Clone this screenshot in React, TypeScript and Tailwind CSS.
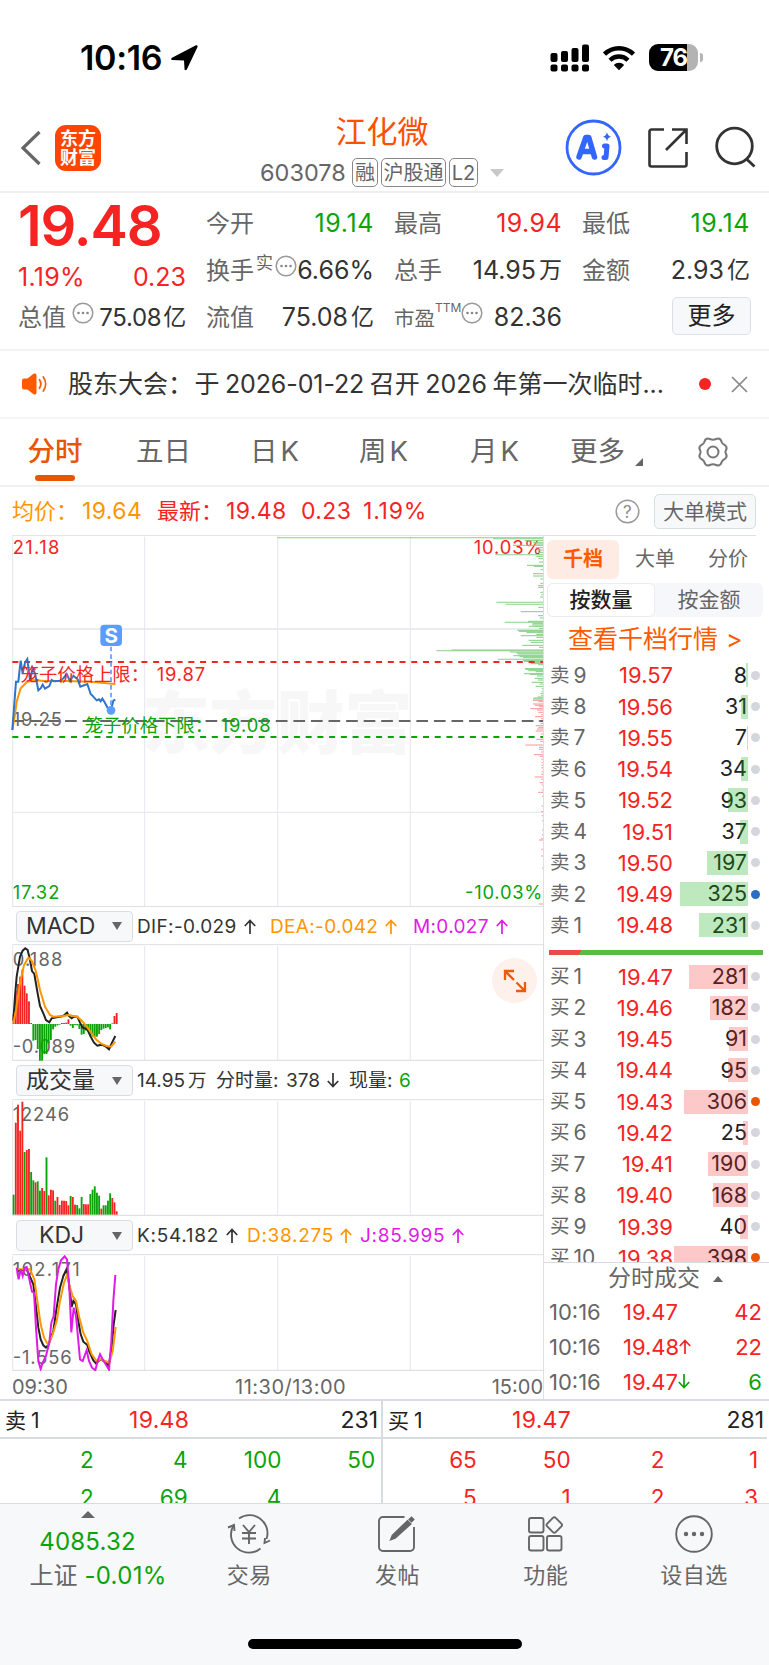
import type { ReactNode } from "react";
import { clsx } from "clsx";

const RED = "#f62323";
const GREEN = "#0aa30a";
const ORANGE = "#ff9500";
const MAGENTA = "#e01be6";
const GRID = "#e3e6ee";

/* Intraday charts are drawn on a 3x grid: 1629 units across 543px. */

const priceLine =
  "37,600 43,520 48,455 55,455 62,392 68,430 75,398 82,387 90,450 98,415 105,430 110,455 115,481 123,474 128,464 135,476 148,468 155,450 162,454 180,452 190,445 200,432 210,453 220,437 233,448 241,470 262,462 272,492 280,500 290,511 297,508 302,514 307,506 314,517 323,534 333,540 340,512 346,509";
const avgLine =
  "37,600 44,560 50,515 62,475 82,455 105,450 130,453 200,453 270,455 346,462";

const difLine =
  "40,362 45,290 50,230 60,170 68,152 76,145 83,150 90,180 96,213 103,222 112,275 120,318 130,340 138,360 148,367 155,355 170,352 190,348 201,338 207,348 215,355 222,350 232,350 240,368 248,383 262,388 272,410 282,428 292,437 305,434 318,440 327,448 335,430 346,408";
const deaLine =
  "40,370 48,330 60,250 72,195 85,173 95,182 108,215 120,270 135,320 150,345 160,350 190,348 205,345 232,350 248,365 262,382 275,400 290,420 305,432 320,438 333,440 346,425";

const kLine =
  "52,390 80,385 100,430 106,480 115,560 122,595 130,613 138,620 145,612 160,570 170,500 180,440 190,405 200,385 206,420 215,498 220,480 228,490 235,540 242,580 250,602 262,612 268,632 280,658 288,667 302,655 315,662 326,675 335,620 341,550 347,507";
const dLine =
  "52,385 90,385 103,415 112,480 122,550 132,590 145,612 158,580 170,540 180,480 192,425 201,402 210,440 218,465 228,480 238,530 250,575 262,600 275,640 290,660 302,655 315,660 328,665 338,630 347,558";
const jLine =
  "50,380 56,415 62,385 68,405 74,380 80,378 88,415 96,452 102,455 108,560 115,660 122,684 128,665 138,645 148,605 154,545 161,525 168,430 175,385 183,358 194,346 201,355 208,440 214,574 221,500 228,525 235,600 240,655 248,660 260,628 267,660 276,680 286,688 293,660 300,640 308,655 327,686 334,600 340,480 346,402";

const macdBars = [
  30, 100, 120, 142, 163, 115, 92, 68, 3, -50, -48, -75, -110, -110, -90, -90, -58, -48, -16, -8, -4, -2, 3, 3, 4, 14,
  -5, -12, -3, -4, -15, -32, -30, -20, -22, -35, -38, -38, -38, -30, -18, -14, -12, -10, -16, 2, 24, 33,
];

// positive = up minute, negative = down minute
const volumeBars = [
  -60, 276, 330, 252, 339, -188, 194, 197, -128, -103, 97, -100, -72, 80, 71, -172, 58, 75, 73, -42, 53, 29, 42, 42, 41,
  28, -56, 53, 30, -29, -19, -53, 32, 31, 31, -62, -75, -85, -66, -57, 18, -28, -28, -42, -64, 50, 37, 10,
];

// order depth, [y, length]
const depth: [number, number][] = [
  [23, 798], [26, 150], [32, 55], [38, 30], [42, 24], [46, 90], [53, 22], [60, 16], [67, 14], [74, 143], [79, 20],
  [86, 14], [96, 12], [106, 48], [109, 28], [119, 8], [131, 30], [138, 30], [147, 8], [160, 8], [167, 15], [172, 14],
  [187, 8], [194, 5], [201, 8], [217, 140], [223, 112], [232, 14], [245, 67], [257, 15], [264, 10], [274, 45],
  [277, 115], [281, 32], [285, 32], [289, 42], [295, 12], [301, 77], [304, 72], [308, 50], [313, 20], [317, 67],
  [322, 20], [331, 43], [337, 37], [346, 62], [352, 12], [360, 275], [362, 320], [366, 100], [369, 80], [372, 75],
  [377, 89], [380, 70], [383, 60], [388, 136], [391, 60], [394, 57], [398, 40], [401, 36], [404, 14], [416, 55],
  [418, 52], [422, 44], [425, 22], [431, 57], [433, 40], [438, 18], [445, 25], [450, 15], [457, 34], [462, 10],
  [469, 22], [476, 4], [484, 4], [490, 8], [496, 6], [501, 16], [504, 28], [507, 30],
  [511, 30], [515, 14], [522, 30], [526, 24], [530, 12], [536, 38], [540, 18], [547, 14], [554, 6], [560, 24],
  [566, 6], [573, 14], [580, 8], [587, 22], [592, 14], [597, 18], [603, 22], [612, 6], [620, 8], [628, 20],
  [634, 8], [645, 53], [652, 12], [658, 12], [666, 6], [674, 27], [679, 10], [688, 5], [698, 4], [706, 5], [713, 5],
  [725, 4], [733, 6], [741, 25], [748, 6], [758, 10], [765, 4], [780, 4], [787, 14], [799, 3], [828, 4], [845, 6],
  [857, 4], [872, 3], [900, 3], [914, 3], [926, 6], [930, 12], [958, 5], [978, 6], [1015, 3], [1122, 12],
];

const asks: [string, string, number][] = [
  ["卖9", "19.57", 8],
  ["卖8", "19.56", 31],
  ["卖7", "19.55", 7],
  ["卖6", "19.54", 34],
  ["卖5", "19.52", 93],
  ["卖4", "19.51", 37],
  ["卖3", "19.50", 197],
  ["卖2", "19.49", 325],
  ["卖1", "19.48", 231],
];

const bids: [string, string, number][] = [
  ["买1", "19.47", 281],
  ["买2", "19.46", 182],
  ["买3", "19.45", 91],
  ["买4", "19.44", 95],
  ["买5", "19.43", 306],
  ["买6", "19.42", 25],
  ["买7", "19.41", 190],
  ["买8", "19.40", 168],
  ["买9", "19.39", 40],
  ["买10", "19.38", 398],
];

const barWidth = (qty: number) => Math.max(1, Math.min(74, Math.round(qty * 0.21)));

const StatusBar = () => (
  <div className="flex h-[96px] shrink-0 items-center pt-[19px] text-black">
    <span className="ml-[80px] w-[86px] text-[34px] font-semibold leading-none tracking-[-0.300px]">10:16</span>
    <svg className="ml-[5px] h-[26px] w-[27px]" viewBox="0 0 27 26">
      <path d="M26.500 2 15.800 24.500c-.6 1.200-2.200 1-2.300-.4L13 15.500 1.400 15C0 14.900-.1 13.300 1 12.700L24.500.5c1.200-.6 2.500.3 2 1.500Z" />
    </svg>
    <svg className="ml-[352px] h-[28px] w-[40px]" viewBox="0 0 40 28">
      <rect x="0.500" y="9" width="7" height="9" rx="2" />
      <rect x="11" y="7" width="7" height="11" rx="2" />
      <rect x="21.500" y="4" width="7" height="14" rx="2" />
      <rect x="32" y="0.500" width="7" height="17.500" rx="2" />
      <rect x="0.500" y="20.500" width="7" height="7" rx="2" />
      <rect x="11" y="20.500" width="7" height="7" rx="2" />
      <rect x="21.500" y="20.500" width="7" height="7" rx="2" />
      <rect x="32" y="20.500" width="7" height="7" rx="2" />
    </svg>
    <svg className="ml-[12px] h-[26px] w-[34px]" viewBox="0 0 34 26">
      <path d="M2.500 9.200a20.600 20.600 0 0 1 29 0" fill="none" stroke="#000" strokeWidth="4.500" />
      <path d="M8 15.200a12.800 12.800 0 0 1 18 0" fill="none" stroke="#000" strokeWidth="4.300" />
      <path d="M17 25.300 11.800 20a7.400 7.400 0 0 1 10.400 0Z" />
    </svg>
    <div className="ml-[13px] flex h-[27px] w-[49px] items-center justify-center overflow-hidden rounded-[9px] bg-[linear-gradient(90deg,#000_78%,#b3b3b3_78%)]">
      <span className="text-[24px] font-bold leading-none tracking-[-1px] text-white">76</span>
    </div>
    <div className="ml-[2px] h-[9px] w-[3px] rounded-r-full bg-[#b3b3b3]" />
  </div>
);

const Tag = ({ children, className }: { children: ReactNode; className: string }) => (
  <span
    className={clsx(
      "flex h-[29px] items-center justify-center rounded-[5px] border-[1.500px] border-[#888] text-[20px] leading-none text-[#666]",
      className,
    )}
  >
    {children}
  </span>
);

const Header = () => (
  <div className="flex h-[97px] shrink-0 items-start border-b-2 border-[#eee]">
    <svg className="ml-[20px] mt-[34px] h-[36px] w-[22px]" viewBox="0 0 22 36" fill="none" stroke="#666" strokeWidth="3.200">
      <path d="M19.500 2 3 18l16.500 16" />
    </svg>
    <div className="ml-[13px] mt-[29px] flex h-[46px] w-[46px] flex-col items-center justify-center rounded-[11px] bg-[#ff4600] text-[18px] font-bold leading-[19px] text-white">
      <span>东方</span>
      <span>财富</span>
    </div>
    <div className="ml-[159px] flex w-[244px] flex-col pt-[18px]">
      <div className="flex h-[34px] items-center justify-center text-[31px] leading-none text-[#ff5000]">江化微</div>
      <div className="mt-[9px] flex h-[31px] items-center">
        <span className="w-[92px] text-[23.500px] leading-none text-[#666]">603078</span>
        <Tag className="w-[26px]">融</Tag>
        <Tag className="ml-[3px] w-[65px]">沪股通</Tag>
        <Tag className="ml-[3px] w-[29px]">L2</Tag>
        <svg className="ml-[12px] h-[8px] w-[14px]" viewBox="0 0 14 8">
          <path d="M0 0h14L7 8Z" fill="#c8c8c8" />
        </svg>
      </div>
    </div>
    <svg className="ml-[61px] mt-[23px] h-[57px] w-[57px]" viewBox="0 0 57 57" fill="none">
      <circle cx="28.500" cy="28.500" r="26.500" stroke="#3366ff" strokeWidth="2.800" />
      <path
        d="M14 38 20.800 18.500h3L29.500 38M18 32.500h9"
        stroke="#3366ff"
        strokeWidth="5.500"
        strokeLinejoin="round"
        strokeLinecap="round"
      />
      <path d="M39.500 27h2.500L41 38.500h-2" stroke="#3366ff" strokeWidth="5" strokeLinejoin="round" strokeLinecap="round" />
      <path d="M42 13c.5 2.800 1.500 3.900 4 4.700-2.500.8-3.500 1.900-4 4.700-.5-2.800-1.500-3.900-4-4.700 2.500-.8 3.500-1.900 4-4.700Z" fill="#3366ff" />
    </svg>
    <svg className="ml-[25px] mt-[31px] h-[42px] w-[42px]" viewBox="0 0 42 42" fill="none" stroke="#333" strokeWidth="2.600">
      <path d="M17 2.500H4.500a2 2 0 0 0-2 2v33a2 2 0 0 0 2 2h33a2 2 0 0 0 2-2V25" />
      <path d="M25 2.500h14.500V17M39 3 19 23" />
    </svg>
    <svg className="ml-[26px] mt-[30px] h-[44px] w-[44px]" viewBox="0 0 44 44" fill="none" stroke="#333" strokeWidth="2.800">
      <circle cx="19.500" cy="20" r="17.800" />
      <path d="m31.500 33 8 7.500" />
    </svg>
  </div>
);

const Dots = ({ className }: { className?: string }) => (
  <svg className={clsx("h-[22px] w-[22px] shrink-0", className)} viewBox="0 0 22 22">
    <circle cx="11" cy="11" r="9.800" fill="none" stroke="#999" strokeWidth="1.500" />
    <g fill="#888">
      <circle cx="6.500" cy="11" r="1.300" />
      <circle cx="11" cy="11" r="1.300" />
      <circle cx="15.500" cy="11" r="1.300" />
    </g>
  </svg>
);

type StatProps = { label: string; value: string; unit?: string; tone?: string; extra?: ReactNode; small?: boolean };

const Stat = ({ label, value, unit, tone = "text-[#333]", extra, small }: StatProps) => (
  <div className="flex h-[47px] w-[168px] items-center leading-none">
    <span className={clsx("shrink-0 text-[#666]", small ? "mt-[4px] text-[20.500px]" : "text-[24px]")}>{label}</span>
    {extra}
    <span className={clsx("ml-auto flex items-center text-[25px]", tone)}>
      {value}
      {unit && <span className="ml-[3px] text-[23px]">{unit}</span>}
    </span>
  </div>
);

const Quote = () => (
  <div className="flex h-[158px] shrink-0 border-b-2 border-[#f3f3f3] pl-[18px]">
    <div className="w-[168px]">
      <div className="flex h-[66px] items-center text-[56px] font-semibold leading-none tracking-[-1.100px] text-[#f62323]">19.48</div>
      <div className="flex h-[37px] items-center justify-between text-[25px] leading-none text-[#f62323]">
        <span className="tracking-[0.300px]">1.19%</span>
        <span>0.23</span>
      </div>
      <div className="flex h-[43px] items-center leading-none">
        <span className="text-[24px] text-[#666]">总值</span>
        <Dots className="-mt-[10px] ml-[6px]" />
        <span className="ml-auto flex items-center text-[24px] tracking-[-0.300px] text-[#333]">
          75.08<span className="ml-[2px] text-[23px]">亿</span>
        </span>
      </div>
    </div>
    <div className="ml-[20px] grid h-[141px] grid-cols-[168px_168px_168px] gap-x-[20px] pt-[7px]">
      <Stat label="今开" value="19.14" tone="text-[#0aa30a] tracking-[0.600px]" />
      <Stat label="最高" value="19.94" tone="text-[#f62323] tracking-[0.400px]" />
      <Stat label="最低" value="19.14" tone="text-[#0aa30a] tracking-[0.600px]" />
      <Stat
        label="换手"
        value="6.66%"
        extra={
          <>
            <span className="-mt-[14px] ml-[2px] text-[17px] text-[#666]">实</span>
            <Dots className="-mt-[10px] ml-[2px]" />
          </>
        }
      />
      <Stat label="总手" value="14.95" unit="万" />
      <Stat label="金额" value="2.93" unit="亿" />
      <Stat label="流值" value="75.08" unit="亿" />
      <Stat
        label="市盈"
        value="82.36"
        small
        extra={
          <>
            <span className="-mt-[20px] text-[12px] text-[#666]">TTM</span>
            <Dots className="-mt-[10px]" />
          </>
        }
      />
      <div className="flex h-[44px] w-[169px] items-center justify-end">
        <button className="h-[38px] w-[79px] rounded-[5px] border-[1.500px] border-[#dcdfe6] bg-[#f7f8fa] text-[24px] leading-none text-[#222]">
          更多
        </button>
      </div>
    </div>
  </div>
);

const Notice = () => (
  <div className="flex h-[68px] shrink-0 items-center border-b-2 border-[#f5f5f5] leading-none text-[#333]">
    <svg className="ml-[22px] h-[22px] w-[26px]" viewBox="0 0 26 22">
      <path d="M0 7.500a2 2 0 0 1 2-2h3.500L11.500.8C13 0 14.500.6 14.500 2.200v17.600c0 1.600-1.500 2.200-3 1.400L5.500 16.500H2a2 2 0 0 1-2-2Z" fill="#ff5a00" />
      <path d="M17.500 6.800c1.600 2.500 1.600 5.900 0 8.400M21.300 4c3 4.200 3 9.800 0 14" fill="none" stroke="#ff5a00" strokeWidth="1.800" strokeLinecap="round" />
    </svg>
    <span className="ml-[20px] flex w-[596px] items-center justify-between whitespace-nowrap text-[25px]">
      <span>股东大会：</span>
      <span className="-ml-[4px]">于</span>
      <span className="tracking-[-0.100px]">2026-01-22</span>
      <span>召开</span>
      <span>2026</span>
      <span>年第一次临时...</span>
    </span>
    <span className="ml-[35px] h-[12px] w-[12px] rounded-full bg-[#f62323]" />
    <svg className="ml-[20px] h-[17px] w-[17px]" viewBox="0 0 17 17" stroke="#888" strokeWidth="1.700">
      <path d="m1 1 15 15M16 1 1 16" />
    </svg>
  </div>
);

const KTab = ({ period, className }: { period: string; className: string }) => (
  <span className={clsx("flex items-center gap-[3px]", className)}>
    <span>{period}</span>
    <span>K</span>
  </span>
);

const Tabs = () => (
  <div className="flex h-[68px] shrink-0 items-center border-b-2 border-[#f0f0f0] text-[27.500px] leading-none text-[#666]">
    <div className="ml-[27px] flex w-[56px] flex-col items-center pt-[15px] text-[#ea5504]">
      <span className="font-medium">分时</span>
      <span className="mt-[10px] h-[6px] w-[40px] rounded-[3px] bg-[#ea5504]" />
    </div>
    <span className="ml-[53px] w-[114px]">五日</span>
    <KTab period="日" className="w-[109px]" />
    <KTab period="周" className="w-[111px]" />
    <KTab period="月" className="w-[100px]" />
    <span className="w-[57px]">更多</span>
    <svg className="ml-[8px] mt-[20px] h-[8px] w-[8px]" viewBox="0 0 8 8">
      <path d="M8 0v8H0Z" fill="#666" />
    </svg>
    <svg className="ml-[53px] h-[32px] w-[34px]" viewBox="0 0 34 32" fill="none" stroke="#777" strokeWidth="2">
      <path
        d="M12 2.500c1.500 0 2.500 1.200 5 1.200s3.500-1.200 5-1.200c2.500 0 3.200 1.500 3.800 3.700.6 2 2.500 2.300 3.900 3.700 1.600 1.700.9 3.300.1 4.600-.6 1-.6 2 0 3 .8 1.300 1.500 2.900-.1 4.600-1.400 1.400-3.300 1.700-3.900 3.700-.6 2.200-1.300 3.700-3.800 3.700-1.500 0-2.500-1.200-5-1.200s-3.500 1.200-5 1.200c-2.500 0-3.200-1.500-3.800-3.700-.6-2-2.500-2.300-3.900-3.700-1.600-1.700-.9-3.300-.1-4.600.6-1 .6-2 0-3-.8-1.300-1.500-2.900.1-4.600 1.400-1.400 3.300-1.700 3.900-3.700C8.800 4 9.500 2.500 12 2.500Z"
        strokeLinejoin="round"
      />
      <circle cx="17" cy="16" r="5.500" />
    </svg>
  </div>
);

const InfoRow = () => (
  <div className="flex h-[48px] shrink-0 items-center text-[23px] leading-none tracking-[0.400px]">
    <span className="ml-[12px] w-[70px] text-[22px] tracking-normal text-[#ff9500]">均价：</span>
    <span className="w-[75px] text-[#ff9500]">19.64</span>
    <span className="w-[69px] text-[22px] tracking-normal text-[#f62323]">最新：</span>
    <span className="w-[75px] text-[#f62323]">19.48</span>
    <span className="w-[62px] text-[#f62323]">0.23</span>
    <span className="w-[252px] tracking-[0.800px] text-[#f62323]">1.19%</span>
    <svg className="h-[25px] w-[25px]" viewBox="0 0 25 25">
      <circle cx="12.500" cy="12.500" r="11.300" fill="none" stroke="#999" strokeWidth="1.500" />
      <text x="12.500" y="18.500" textAnchor="middle" fontSize="17" fill="#888">?</text>
    </svg>
    <button className="ml-[14px] h-[35px] w-[102px] rounded-[5px] border-[1.500px] border-[#d9dde6] bg-[#f7f8fa] text-[21px] leading-none tracking-normal text-[#666]">
      大单模式
    </button>
  </div>
);

const GridLines = ({ top, height }: { top: number; height: number }) => (
  <g stroke={GRID} strokeWidth="3">
    {[38, 434, 833, 1231].map((x) => (
      <path key={x} d={`M${x} ${top + 6}v${height - 8}`} />
    ))}
    <path d={`M37 ${top + 2}H1632`} stroke="#dcdfe5" />
    <path d={`M37 ${top + height - 2}H1632`} stroke="#d8dbe2" />
  </g>
);

const Bars = ({ data, zero, signed }: { data: number[]; zero: number; signed?: boolean }) => (
  <g>
    {data.map((v, i) => (
      <rect
        key={i}
        x={38 + i * 6.58}
        y={signed && v < 0 ? zero : zero - Math.abs(v)}
        width="5.600"
        height={Math.abs(v)}
        fill={v < 0 ? GREEN : RED}
      />
    ))}
  </g>
);

const PriceChart = () => (
  <svg className="block h-[372px] w-[543px]" viewBox="0 15 1629 1116">
    <text x="425" y="655" textLength="812" fontSize="204" fontWeight="900" fill="#f7f7f7">东方财富</text>
    <GridLines top={14} height={1118} />
    <path d="M37 297H1632" stroke={GRID} strokeWidth="5" />
    <path d="M37 847H1632" stroke={GRID} strokeWidth="3" />
    <g fontSize="55">
      <text x="38" y="73" fill={RED} textLength="140">21.18</text>
      <text x="1627" y="73" fill={RED} textAnchor="end" textLength="206">10.03%</text>
      <text x="38" y="588" fill="#666" textLength="148">19.25</text>
      <text x="38" y="1107" fill={GREEN} textLength="140">17.32</text>
      <text x="1627" y="1107" fill={GREEN} textAnchor="end" textLength="232">-10.03%</text>
    </g>
    <g strokeWidth="3.200">
      {depth.map(([y, len]) => (
        <path key={y} d={`M1629 ${y}h${-len}`} stroke={y < 509 ? "#86d086" : "#fb9a9a"} />
      ))}
    </g>
    <path d="M37 396H1629" stroke={RED} strokeWidth="6.500" strokeDasharray="18 17.200" />
    <path d="M37 573H1629" stroke="#666" strokeWidth="6" strokeDasharray="35 17.700" />
    <path d="M37 621H1629" stroke={GREEN} strokeWidth="6.500" strokeDasharray="18 17.200" />
    <polyline points={avgLine} fill="none" stroke={ORANGE} strokeWidth="6" />
    <polyline points={priceLine} fill="none" stroke="#2f74c8" strokeWidth="6" />
    <g fontSize="55">
      <text x="62" y="452" fill={RED} textLength="385">笼子价格上限：</text>
      <text x="470" y="452" fill={RED} textLength="145">19.87</text>
      <text x="254" y="607" fill={GREEN} textLength="385">笼子价格下限：</text>
      <text x="662" y="607" fill={GREEN} textLength="150">19.08</text>
    </g>
    <path d="M333 350V530" stroke="#5b9dff" strokeWidth="5" strokeDasharray="14 9" />
    <circle cx="333" cy="541" r="13" fill="#5b9dff" />
    <rect x="301" y="284" width="65" height="64" rx="12" fill="#5b9dff" />
    <text x="333.500" y="338" textAnchor="middle" fontSize="62" fontWeight="700" fill="#fff">S</text>
  </svg>
);

const Picker = ({ name, center }: { name: string; center?: boolean }) => (
  <button className="ml-[16px] flex h-[31px] w-[117px] shrink-0 items-center rounded-[4px] border border-[#d9dde3] bg-[#f6f8fa] pl-[9px] text-[23px] leading-none tracking-normal text-[#333]">
    <span className={clsx("w-[86px] text-left", center && "pl-[13px]")}>{name}</span>
    <svg className="h-[8px] w-[10px]" viewBox="0 0 10 8">
      <path d="M0 0h10L5 8Z" fill="#666" />
    </svg>
  </button>
);

const Arrow = ({ down, className = "ml-[7px]" }: { down?: boolean; className?: string }) => (
  <svg
    className={clsx("inline-block h-[15px] w-[12px] shrink-0", down && "rotate-180", className)}
    viewBox="0 0 12 15"
    fill="none"
    stroke="currentColor"
    strokeWidth="1.700"
  >
    <path d="M6 15V1.500M.8 7 6 1.500 11.200 7" />
  </svg>
);

const IndicatorHead = ({ name, center, className, children }: { name: string; center?: boolean; className: string; children: ReactNode }) => (
  <div className={clsx("flex items-center whitespace-nowrap pt-[1px] text-[19px] leading-none text-[#333]", className)}>
    <Picker name={name} center={center} />
    {children}
  </div>
);

const Charts = () => (
  <div className="flex w-[544px] shrink-0 flex-col border-r border-[#dcdfe5]">
    <PriceChart />
    <IndicatorHead name="MACD" className="h-[37px] tracking-[0.350px]">
      <span className="ml-[4px] flex w-[133px] items-center">DIF:-0.029<Arrow /></span>
      <span className="flex w-[143px] items-center text-[#ff9500]">DEA:-0.042<Arrow /></span>
      <span className="flex items-center text-[#e01be6]">M:0.027<Arrow /></span>
    </IndicatorHead>
    <div className="relative h-[117px]">
      <svg className="block h-[117px] w-[543px]" viewBox="0 132 1629 351">
        <GridLines top={132} height={351} />
        <g fontSize="55" fill="#666">
          <text x="38" y="198" textLength="149">0.188</text>
          <text x="38" y="460" textLength="187">-0.089</text>
        </g>
        <Bars data={macdBars} zero={372} signed />
        <polyline points={difLine} fill="none" stroke="#222" strokeWidth="6" />
        <polyline points={deaLine} fill="none" stroke={ORANGE} strokeWidth="6" />
      </svg>
      <button className="absolute left-[492px] top-[14px] flex h-[45px] w-[45px] items-center justify-center rounded-full bg-[#fef0ea]">
        <svg className="h-[24px] w-[24px]" viewBox="0 0 24 24" fill="none" stroke="#ee5a0a" strokeWidth="2.300">
          <path d="M2 11V2h9M2 2l9 9M22 13v9h-9M22 22l-8.500-8.500" />
        </svg>
      </button>
    </div>
    <IndicatorHead name="成交量" className="h-[38px]">
      <span className="ml-[4px] flex w-[79px] items-center gap-[3px]">
        14.95<span className="text-[18.500px]">万</span>
      </span>
      <span className="w-[70px]">分时量:</span>
      <span className="flex w-[63px] items-center">378<Arrow down /></span>
      <span className="w-[50px]">现量:</span>
      <span className="text-[#0aa30a]">6</span>
    </IndicatorHead>
    <svg className="block h-[117px] w-[543px]" viewBox="0 597 1629 351">
      <GridLines top={597} height={351} />
      <text x="38" y="662" fontSize="55" fill="#666" textLength="169">12246</text>
      <Bars data={volumeBars} zero={944} />
    </svg>
    <IndicatorHead name="KDJ" center className="h-[38px] tracking-[0.700px]">
      <span className="ml-[4px] flex w-[110px] items-center">K:54.182<Arrow /></span>
      <span className="flex w-[113px] items-center text-[#ff9500]">D:38.275<Arrow className="ml-[6px]" /></span>
      <span className="flex items-center text-[#e01be6]">J:85.995<Arrow /></span>
    </IndicatorHead>
    <svg className="block h-[117px] w-[543px]" viewBox="0 339 1629 351">
      <GridLines top={339} height={351} />
      <g fontSize="55" fill="#666">
        <text x="38" y="405" textLength="201">102.171</text>
        <text x="38" y="669" textLength="177">-1.556</text>
      </g>
      <polyline points={kLine} fill="none" stroke="#222" strokeWidth="6" />
      <polyline points={dLine} fill="none" stroke={ORANGE} strokeWidth="6" />
      <polyline points={jLine} fill="none" stroke={MAGENTA} strokeWidth="6" />
    </svg>
    <div className="flex h-[28px] items-center pl-[12px] pt-[3px] text-[20px] leading-none text-[#666]">
      <span className="w-[223px]">09:30</span>
      <span className="tracking-[0.500px]">11:30/13:00</span>
      <span className="ml-auto">15:00</span>
    </div>
  </div>
);

const Level = ({ row, side }: { row: [string, string, number]; side: "ask" | "bid" }) => {
  const [label, price, qty] = row;
  const big = qty > 300;
  return (
    <div className="flex h-[31.250px] shrink-0 items-center text-[21px] leading-none">
      <span className="ml-[6px] flex w-[47px] items-center gap-[4px] text-[#666]">
        <span className="text-[19.500px]">{label[0]}</span>
        {label.slice(1)}
      </span>
      <span className="w-[76px] text-right text-[22px] text-[#f62323]">{price}</span>
      <span className="relative flex h-[24px] w-[75px] items-center justify-end pr-[1px] text-[21.500px] text-[#222]">
        {qty}
        <span
          className={clsx("absolute right-0 top-0 h-[24px]", side === "ask" ? "bg-[#14ab14]/28" : "bg-[#f62323]/25")}
          style={{ width: barWidth(qty) }}
        />
      </span>
      <span
        className={clsx(
          "ml-[3px] h-[9px] w-[9px] rounded-full",
          !big && "bg-[#d3d6dd]",
          big && (side === "ask" ? "bg-[#2a6fc4]" : "bg-[#ea5504]"),
        )}
      />
    </div>
  );
};

const Trade = ({ price, qty, arrow, down }: { price: string; qty: string; arrow?: ReactNode; down?: boolean }) => (
  <div className="flex h-[35px] shrink-0 items-center text-[22px] text-[#f62323]">
    <span className="ml-[5px] w-[74px] text-[#666]">10:16</span>
    <span className="flex items-center">
      {price}
      {arrow}
    </span>
    <span className={clsx("ml-auto mr-[7px]", down && "text-[#0aa30a]")}>{qty}</span>
  </div>
);

const OrderBook = () => (
  <div className="flex w-[225px] flex-col leading-none">
    <div className="h-[1px] w-[212px] bg-[#dfe1e6]" />
    <div className="mt-[4px] flex h-[39px] items-center text-[20px] text-[#666]">
      <span className="ml-[3px] flex h-[39px] w-[72px] items-center justify-center rounded-[6px] bg-[#feece4] font-bold text-[#ff5a00]">
        千档
      </span>
      <span className="ml-[16px] w-[73px]">大单</span>
      <span>分价</span>
    </div>
    <div className="ml-[3px] mt-[4px] flex h-[35px] w-[216px] rounded-[6px] bg-[#f6f7fa] text-[21px] text-[#666]">
      <span className="flex w-[108px] items-center justify-center rounded-[6px] border-[1.500px] border-[#ebecf0] bg-white font-medium text-[#222]">
        按数量
      </span>
      <span className="flex w-[108px] items-center justify-center">按金额</span>
    </div>
    <div className="flex h-[44px] items-center gap-[8px] pl-[24px] pt-[3px] text-[25px] text-[#ff5a00]">
      <span>查看千档行情</span>
      <span>&gt;</span>
    </div>
    {asks.map((row) => (
      <Level key={row[0]} row={row} side="ask" />
    ))}
    <div className="mb-[6px] ml-[5px] mt-[9px] h-[5px] w-[214px] shrink-0 bg-[linear-gradient(120deg,#ea4a4a_15%,#5cb946_15%)]" />
    <div className="h-[301px] shrink-0 overflow-hidden">
      {bids.map((row) => (
        <Level key={row[0]} row={row} side="bid" />
      ))}
    </div>
    <div className="flex h-[32px] shrink-0 items-center justify-center border-t border-[#d8dbe2] pl-[18px] text-[23px] text-[#666]">
      分时成交
      <svg className="ml-[13px] h-[6px] w-[10px]" viewBox="0 0 10 6">
        <path d="M0 6h10L5 0Z" fill="#666" />
      </svg>
    </div>
    <Trade price="19.47" qty="42" />
    <Trade price="19.48" qty="22" arrow={<Arrow className="text-[#f62323]" />} />
    <Trade price="19.47" qty="6" down arrow={<Arrow down className="text-[#0aa30a]" />} />
  </div>
);

type QueueSideProps = { name: string; price: string; qty: string; rows: string[][]; tone: string; className: string };

const QueueSide = ({ name, price, qty, rows, tone, className }: QueueSideProps) => (
  <div className={clsx("shrink-0", className)}>
    <div className="flex h-[38px] items-center border-b-2 border-[#d8dce2] pt-[3px] text-[23px] text-[#222]">
      <span className="flex w-[129px] items-center gap-[5px] pl-[5px] text-[21px]">
        <span>{name[0]}</span>
        {name[1]}
      </span>
      <span className="tracking-[0.300px] text-[#f62323]">{price}</span>
      <span className="ml-auto pr-[3px]">{qty}</span>
    </div>
    {rows.map((r, i) => (
      <div key={i} className={clsx("flex h-[38px] items-center pt-[4px] text-[22.500px]", tone)}>
        {r.map((c, j) => (
          <span key={j} className="w-[93.800px] shrink-0 text-right">{c}</span>
        ))}
      </div>
    ))}
  </div>
);

const Queue = () => (
  <div className="flex h-[104px] shrink-0 overflow-hidden border-t-2 border-[#d8dce2] leading-none">
    <QueueSide
      name="卖1"
      price="19.48"
      qty="231"
      tone="text-[#0aa30a]"
      className="w-[383px] border-r-2 border-[#d8dce2]"
      rows={[["2", "4", "100", "50"], ["2", "69", "4", ""]]}
    />
    <QueueSide
      name="买1"
      price="19.47"
      qty="281"
      tone="text-[#f62323]"
      className="w-[384px]"
      rows={[["65", "50", "2", "1"], ["5", "1", "2", "3"]]}
    />
  </div>
);

const NavItem = ({ label, children }: { label: string; children: ReactNode }) => (
  <div className="flex w-[148.300px] flex-col items-center pt-[10px]">
    <svg className="h-[40px] w-[44px]" viewBox="0 0 44 40" fill="none" stroke="#666" strokeWidth="1.900">
      {children}
    </svg>
    <span className="mt-[10px] text-[22px] tracking-[0.500px]">{label}</span>
  </div>
);

const BottomNav = () => (
  <div className="flex h-[162px] shrink-0 flex-col border-t border-[#d8dbe0] bg-[#f7f8fa] leading-none text-[#666]">
    <div className="flex h-[135px]">
      <div className="flex w-[175px] flex-col items-center pt-[7px]">
        <svg className="h-[7px] w-[14px]" viewBox="0 0 14 7">
          <path d="M0 7h14L7 0Z" fill="#666" />
        </svg>
        <span className="mt-[12px] text-[24px] tracking-[0.200px] text-[#0aa30a]">4085.32</span>
        <span className="mt-[10px] flex items-center gap-[7px] whitespace-nowrap pl-[21px] text-[24px]">
          上证 <span className="tracking-[0.300px] text-[#0aa30a]">-0.01%</span>
        </span>
      </div>
      <NavItem label="交易">
        <path d="M12 4.500a18 18 0 0 1 27.500 20.500M33.500 34.500A18 18 0 0 1 6.500 11.500" />
        <path d="M1 13.500l6-2.500.5 6M43 26.500l-5.500 2.500.5-5" />
        <path d="m16 11 6 7 6-7M22 18v12M15 19h14M15 24.500h14" />
      </NavItem>
      <NavItem label="发帖">
        <path d="M29.500 3H8a4 4 0 0 0-4 4v26a4 4 0 0 0 4 4h27a4 4 0 0 0 4-4V13" />
        <path d="m32.500 7 3 3L20 24l-4 1.500 1.500-4ZM34.500 5.500l2-2 2 2-2 2Z" fill="#666" />
      </NavItem>
      <NavItem label="功能">
        <rect x="5" y="4" width="14.500" height="14.500" rx="2" />
        <rect x="5" y="22" width="14.500" height="14.500" rx="2" />
        <rect x="23" y="22" width="14.500" height="14.500" rx="2" />
        <rect x="24.300" y="5" width="12" height="12" rx="2" transform="rotate(45 30.300 11)" />
      </NavItem>
      <NavItem label="设自选">
        <circle cx="22" cy="20" r="17.800" />
        <g fill="#666" stroke="none">
          <circle cx="14" cy="20" r="2.200" />
          <circle cx="22" cy="20" r="2.200" />
          <circle cx="30" cy="20" r="2.200" />
        </g>
      </NavItem>
    </div>
    <div className="mx-auto h-[10px] w-[274px] shrink-0 rounded-full bg-black" />
  </div>
);

export default function App() {
  return (
    <div className="flex h-[1665px] w-[769px] flex-col overflow-hidden bg-white font-['Inter','Noto_Sans_CJK_SC',sans-serif]">
      <StatusBar />
      <Header />
      <Quote />
      <Notice />
      <Tabs />
      <InfoRow />
      <div className="flex h-[864px] shrink-0 overflow-hidden">
        <Charts />
        <OrderBook />
      </div>
      <Queue />
      <BottomNav />
    </div>
  );
}
